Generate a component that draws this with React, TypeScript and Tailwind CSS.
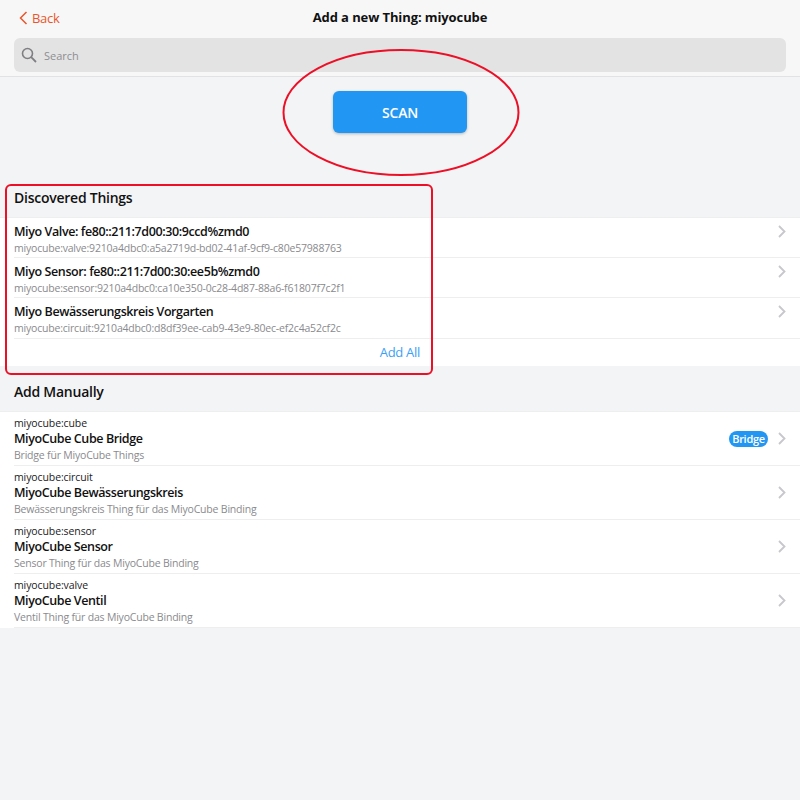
const font = { fontFamily: '"Open Sans", "Noto Sans", sans-serif' };

function Chevron({ className = "" }: { className?: string }) {
  return (
    <svg width="8" height="13" viewBox="0 0 8 13" fill="none" className={className}>
      <path d="M1 1l5.5 5.5L1 12" stroke="#c7c7cc" strokeWidth="1.8" />
    </svg>
  );
}

function DiscRow({ title, sub, h }: { title: string; sub: string; h: string }) {
  return (
    <div className={`flex pl-[14px] ${h}`}>
      <div className="flex-1 flex justify-between pr-[14px] border-b border-[#eeeeef]">
        <div className="pt-[5px]">
          <div className="text-[12.5px] leading-[18px] font-semibold text-[#111] tracking-[-0.4px]">{title}</div>
          <div className="text-[10.5px] leading-[15px] text-[#8a8a8e] tracking-[-0.2px]">{sub}</div>
        </div>
        <Chevron className="mt-[7px]" />
      </div>
    </div>
  );
}

function ManRow({ top, title, sub, badge }: { top: string; title: string; sub: string; badge?: boolean }) {
  return (
    <div className="flex pl-[14px] h-[54px]">
      <div className="flex-1 flex justify-between pr-[14px] border-b border-[#eeeeef]">
        <div className="pt-[4px]">
          <div className="text-[10.5px] leading-[15px] text-[#222] tracking-[-0.1px]">{top}</div>
          <div className="text-[12.5px] leading-[16px] font-semibold text-[#111] tracking-[-0.4px]">{title}</div>
          <div className="text-[10.5px] leading-[16px] text-[#8a8a8e] tracking-[-0.2px]">{sub}</div>
        </div>
        <div className="flex items-center gap-[10px]">
          {badge && (
            <span className="h-[16px] w-[39px] rounded-full bg-[#2196f3] text-white text-[11px] font-semibold leading-[16px] text-center tracking-[-0.3px]">
              Bridge
            </span>
          )}
          <Chevron />
        </div>
      </div>
    </div>
  );
}

export default function App() {
  return (
    <div className="relative w-[800px] h-[800px] overflow-hidden bg-[#f3f4f6]" style={font}>
      <header className="h-[77px] bg-[#f7f7f8] border-b border-[#e2e2e4] px-[14px]">
        <div className="relative h-[36px] flex items-center justify-center">
          <div className="absolute left-[5px] top-[10px] flex items-center gap-[4px] text-[#e8562a] text-[13px] leading-[16px] tracking-[-0.3px]">
            <svg width="9" height="14" viewBox="0 0 9 14" fill="none">
              <path d="M7.5 1L1.5 7l6 6" stroke="#e8562a" strokeWidth="1.5" />
            </svg>
            Back
          </div>
          <div className="text-[13px] font-bold text-[#111] tracking-[-0.1px]">Add a new Thing: miyocube</div>
        </div>
        <div className="mt-[2px] h-[34px] rounded-[6px] bg-[#e3e3e4] flex items-center pl-[7px] gap-[7px]">
          <svg width="16" height="16" viewBox="0 0 16 16" fill="none">
            <circle cx="6.5" cy="6.5" r="5" stroke="#7f7f82" strokeWidth="1.6" />
            <path d="M10.2 10.2L15 15" stroke="#7f7f82" strokeWidth="1.8" />
          </svg>
          <span className="text-[11px] leading-[15px] mt-[1px] text-[#8e8e92]">Search</span>
        </div>
      </header>

      <div className="flex justify-center pt-[14px]">
        <button className="w-[134px] h-[42px] rounded-[6px] bg-[#2196f3] text-white text-[14px] font-semibold tracking-[-0.2px] shadow-[0_1px_3px_rgba(0,0,0,0.25)]">
          SCAN
        </button>
      </div>

      <h2 className="mt-[55px] px-[14px] h-[26px] text-[14px] leading-[20px] font-semibold text-[#111] tracking-[-0.25px]">
        Discovered Things
      </h2>
      <section className="mt-[3px] bg-white border-t border-[#eeeeef]">
        <DiscRow h="h-[40px]" title="Miyo Valve: fe80::211:7d00:30:9ccd%zmd0" sub="miyocube:valve:9210a4dbc0:a5a2719d-bd02-41af-9cf9-c80e57988763" />
        <DiscRow h="h-[40px]" title="Miyo Sensor: fe80::211:7d00:30:ee5b%zmd0" sub="miyocube:sensor:9210a4dbc0:ca10e350-0c28-4d87-88a6-f61807f7c2f1" />
        <DiscRow h="h-[41px]" title="Miyo Bewässerungskreis Vorgarten" sub="miyocube:circuit:9210a4dbc0:d8df39ee-cab9-43e9-80ec-ef2c4a52cf2c" />
        <div className="h-[27px] flex items-center justify-end pr-[380px] text-[13px] text-[#3ba1f5] tracking-[-0.3px]">Add All</div>
      </section>

      <h2 className="mt-[16px] px-[14px] h-[29px] text-[14px] leading-[20px] font-semibold text-[#111] tracking-[-0.25px]">
        Add Manually
      </h2>
      <section className="bg-white border-t border-[#eeeeef]">
        <ManRow top="miyocube:cube" title="MiyoCube Cube Bridge" sub="Bridge für MiyoCube Things" badge />
        <ManRow top="miyocube:circuit" title="MiyoCube Bewässerungskreis" sub="Bewässerungskreis Thing für das MiyoCube Binding" />
        <ManRow top="miyocube:sensor" title="MiyoCube Sensor" sub="Sensor Thing für das MiyoCube Binding" />
        <ManRow top="miyocube:valve" title="MiyoCube Ventil" sub="Ventil Thing für das MiyoCube Binding" />
      </section>

      <div className="absolute left-[5px] top-[184px] w-[428px] h-[191px] rounded-[6px] border-2 border-[#ec0f26] pointer-events-none" />
      <svg className="absolute left-[280px] top-[46px] pointer-events-none" width="244" height="134" viewBox="0 0 244 134" fill="none">
        <ellipse cx="121" cy="66.5" rx="117.5" ry="62.5" stroke="#ec0f26" strokeWidth="2" />
      </svg>
    </div>
  );
}
